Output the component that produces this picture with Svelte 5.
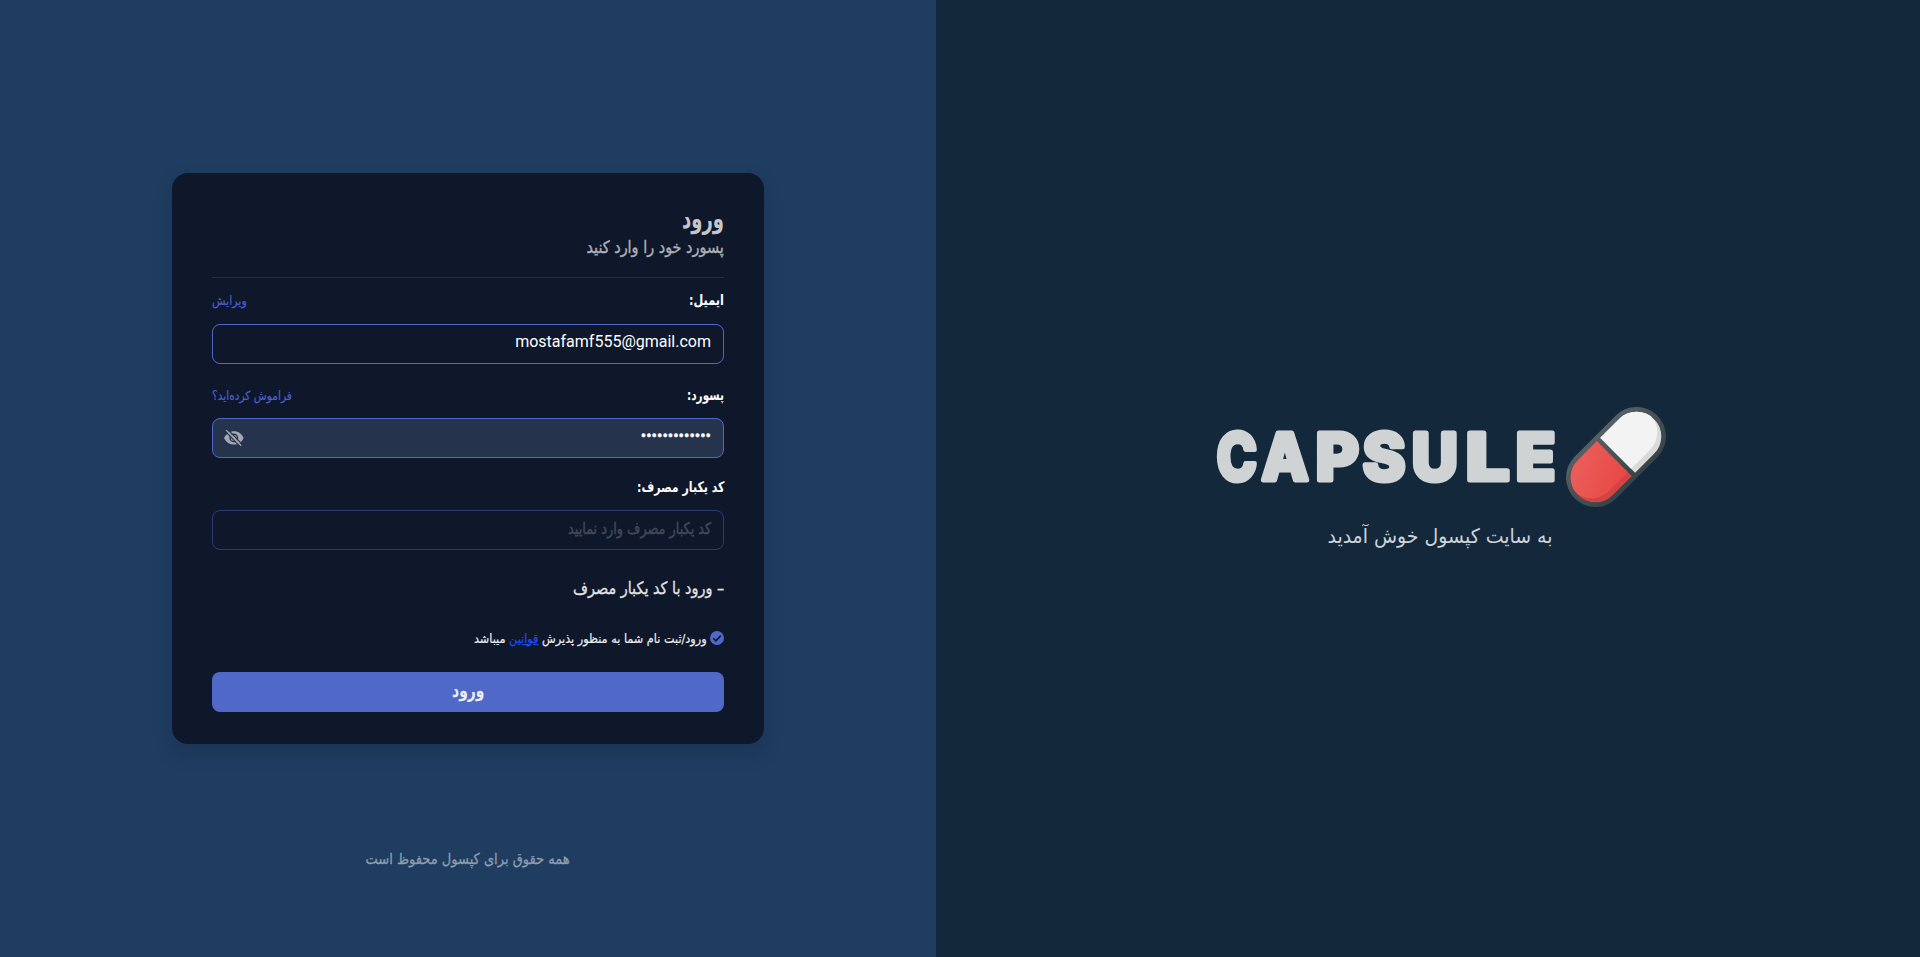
<script>
  let email = 'mostafamf555@gmail.com';
  let dots = '•'.repeat(13);

  // Condenses a line of text horizontally so that it occupies the given width.
  function fit(node, width) {
    node.style.transform = `scaleX(${width / node.offsetWidth})`;
  }

  const wordmark = [
    ['C', 0, 39.5],
    ['A', 45, 46],
    ['P', 99, 42.5],
    ['S', 146, 42],
    ['U', 195, 45.5],
    ['L', 249, 43],
    ['E', 299, 39]
  ];
</script>

<main>
  <section class="form-pane">
    <form class="card" dir="rtl">
      <h1><span use:fit={42}>ورود</span></h1>
      <p class="subtitle"><span use:fit={137.5}>پسورد خود را وارد کنید</span></p>
      <hr />

      <div class="row first">
        <b><span use:fit={35}>ایمیل:</span></b>
        <a class="end"><span use:fit={34.5}>ویرایش</span></a>
      </div>
      <div class="field"><span class="latin" use:fit={196}>{email}</span></div>

      <div class="row">
        <b><span use:fit={37}>پسورد:</span></b>
        <a class="end"><span use:fit={80}>فراموش کرده‌اید؟</span></a>
      </div>
      <div class="field filled">
        <span class="dots" use:fit={70}>{dots}</span>
        <svg class="eye" width="20" height="18" viewBox="0 0 20 18">
          <path d="M0 9C2.2 4.6 5.6 2.2 10 2.2S17.8 4.600 19.600 9C17.800 13.200 14.400 15.600 10 15.600S2.200 13.400 0 9Z" fill="#a3a8b3" />
          <circle cx="9.800" cy="8.900" r="3.700" fill="none" stroke="#26334d" stroke-width="1.400" />
          <path d="M3.400 .2L18.400 15.600" stroke="#26334d" stroke-width="1.200" />
          <path d="M2.200 1.200L17.200 16.800" stroke="#a3a8b3" stroke-width="1.500" />
          <path d="M1.200 2.200L16.200 17.800" stroke="#26334d" stroke-width="1.200" />
        </svg>
      </div>

      <div class="row third"><b><span use:fit={87}>کد یکبار مصرف:</span></b></div>
      <div class="field dim"><span class="placeholder" use:fit={143}>کد یکبار مصرف وارد نمایید</span></div>

      <p class="otp"><span use:fit={151}>– ورود با کد یکبار مصرف</span></p>

      <div class="terms">
        <svg width="14" height="14" viewBox="0 0 14 14">
          <circle cx="7" cy="7" r="7" fill="#5068c8" />
          <path d="M3.300 7.200L5.900 9.800L10.800 4.600" fill="none" stroke="#0f172a" stroke-width="1.600" />
        </svg>
        <span use:fit={233}>ورود/ثبت نام شما به منظور پذیرش <u>قوانین</u> میباشد</span>
      </div>

      <button type="button"><span use:fit={32}>ورود</span></button>
    </form>
    <footer dir="rtl"><span use:fit={204}>همه حقوق برای کپسول محفوظ است</span></footer>
  </section>

  <section class="brand-pane">
    <div class="brand">
      <svg class="wordmark" width="339" height="54" viewBox="0 0 339 54">
        {#each wordmark as [letter, x, width]}
          <text x={x - 0.3} y="49.500" textLength={width + 0.600} lengthAdjust="spacingAndGlyphs">{letter}</text>
        {/each}
      </svg>
      <svg width="100" height="100" viewBox="0 0 100 100">
        <defs>
          <linearGradient id="shell" x1="0" y1="0" x2="0" y2="1">
            <stop offset="0" stop-color="#575f63" />
            <stop offset="1" stop-color="#374347" />
          </linearGradient>
          <linearGradient id="red" x1="0" y1="0" x2="1" y2="1">
            <stop offset="0" stop-color="#ed6360" />
            <stop offset="1" stop-color="#e53f3b" />
          </linearGradient>
          <clipPath id="left"><path d="M-2.300 -24.800H-29A24.800 24.800 0 0 0 -29 24.800H-2.300Z" /></clipPath>
          <clipPath id="right"><path d="M2.300 -24.800H29A24.800 24.800 0 0 1 29 24.800H2.300Z" /></clipPath>
        </defs>
        <g transform="translate(50 50) rotate(-45)">
          <rect x="-58.500" y="-29.500" width="117" height="59" rx="29.500" fill="url(#shell)" />
          <g clip-path="url(#left)">
            <rect x="-54" y="-25" width="54" height="50" fill="#d24441" />
            <rect x="-53.800" y="-30.500" width="107.600" height="49.600" rx="24.800" fill="url(#red)" />
          </g>
          <g clip-path="url(#right)">
            <rect x="0" y="-25" width="54" height="50" fill="#dadada" />
            <rect x="-53.800" y="-30.500" width="107.600" height="49.600" rx="24.800" fill="#f3f3f3" />
          </g>
        </g>
      </svg>
    </div>
    <p class="welcome" dir="rtl"><span use:fit={225}>به سایت کپسول خوش آمدید</span></p>
  </section>
</main>

<style>
  :global(body) {
    margin: 0;
    background: #14283c;
  }
  main {
    display: flex;
    height: 957px;
    overflow: hidden;
    font-family: 'DejaVu Sans', sans-serif;
    color: #fff;
  }
  h1, p {
    margin: 0;
  }
  span {
    display: inline-block;
    white-space: nowrap;
    transform-origin: right;
  }
  .form-pane {
    box-sizing: border-box;
    width: 936px;
    padding-top: 173px;
    background: #1e3d60;
    display: flex;
    flex-direction: column;
    align-items: center;
  }
  .card {
    box-sizing: border-box;
    width: 592px;
    height: 571px;
    padding: 30px 40px 32px;
    border-radius: 16px;
    background: #0f172a;
    box-shadow: 0 10px 20px rgba(15, 23, 42, 0.18);
  }
  h1 {
    font-size: 27px;
    line-height: 32px;
    height: 32px;
    color: #c4c6ca;
  }
  .subtitle {
    font-size: 17px;
    line-height: 24px;
    height: 24px;
    color: #aeb1b8;
    -webkit-text-stroke: 0.4px;
  }
  hr {
    border: 0;
    height: 1px;
    margin: 18px 0 0;
    background: #252d3e;
  }
  .row {
    display: flex;
    justify-content: space-between;
    height: 20px;
    margin: 21px 0 13px;
    font-size: 14.5px;
    line-height: 21px;
  }
  .row.first {
    margin: 12px 0 14px;
  }
  .row.third {
    margin-top: 19px;
  }
  .end {
    font-size: 12.5px;
    line-height: 22px;
    color: #4a5fd0;
    -webkit-text-stroke: 0.2px;
  }
  .end span {
    transform-origin: left;
  }
  .field {
    box-sizing: border-box;
    display: flex;
    justify-content: space-between;
    height: 40px;
    padding: 0 12px;
    border: 1px solid #5068c8;
    border-radius: 8px;
    line-height: 34px;
  }
  .filled {
    background: #26334d;
    padding-left: 11px;
  }
  .dim {
    border-color: #2c3a76;
  }
  .latin {
    font-family: Roboto, sans-serif;
    font-size: 16px;
  }
  .dots {
    font-family: Roboto, sans-serif;
    font-size: 16px;
    line-height: 34px;
    -webkit-text-stroke: 0.5px;
  }
  .eye {
    margin-top: 10px;
  }
  .placeholder {
    font-size: 16px;
    line-height: 36px;
    color: #414857;
    -webkit-text-stroke: 0.5px;
  }
  .otp {
    margin-top: 26px;
    font-size: 17px;
    line-height: 24px;
    height: 24px;
    color: #e3e4e7;
    -webkit-text-stroke: 0.3px;
  }
  .terms {
    display: flex;
    align-items: center;
    gap: 3px;
    height: 20px;
    margin-top: 28px;
    font-size: 12.5px;
    line-height: 19px;
    color: #eceef0;
    -webkit-text-stroke: 0.2px;
  }
  .terms svg {
    flex: none;
  }
  u {
    color: #1d4ef5;
  }
  button {
    display: block;
    width: 100%;
    height: 40px;
    margin-top: 24px;
    padding: 0 0 4px;
    border: 0;
    border-radius: 8px;
    background: #5068c8;
    color: #eceef5;
    font: bold 19px 'DejaVu Sans', sans-serif;
  }
  button span,
  footer span,
  .welcome span {
    transform-origin: center;
  }
  footer {
    margin-top: 105px;
    font-size: 15px;
    line-height: 20px;
    color: #8f9eb0;
    -webkit-text-stroke: 0.3px;
  }
  .brand-pane {
    box-sizing: border-box;
    flex: 1;
    padding-left: 26px;
    display: flex;
    flex-direction: column;
    align-items: center;
    justify-content: center;
    background: #14283c;
  }
  .brand {
    display: flex;
    align-items: center;
    gap: 10px;
    height: 100px;
  }
  .wordmark {
    overflow: visible;
    font: 800 65px Inter, sans-serif;
    fill: #cfd3d4;
    stroke: #cfd3d4;
    stroke-width: 5px;
    stroke-linejoin: round;
  }
  .welcome {
    margin-top: 15px;
    padding-right: 3px;
    font-size: 20px;
    line-height: 28px;
    color: #cfd3d8;
  }
</style>
